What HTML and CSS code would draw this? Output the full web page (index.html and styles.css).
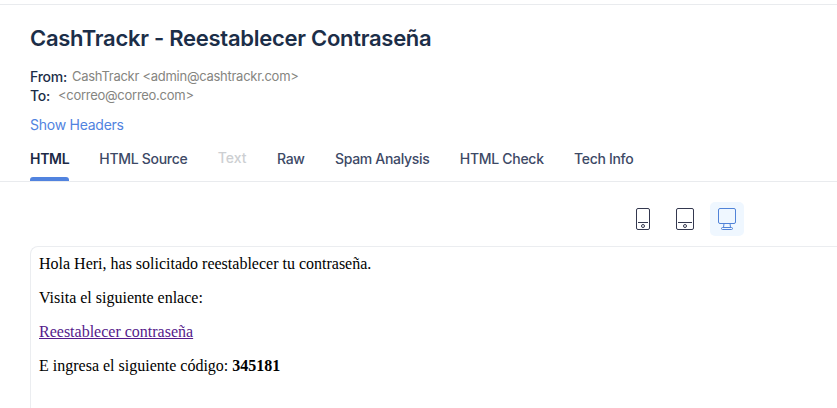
FILE: index.html
```html
<!DOCTYPE html>
<html lang="es">
<head>
<meta charset="utf-8">
<title>CashTrackr - Reestablecer Contraseña</title>
<link rel="stylesheet" href="styles.css">
</head>
<body>
<header class="mail-header">
  <h1 class="subject">CashTrackr - Reestablecer Contraseña</h1>
  <div class="meta"><span class="label">From:</span><span class="value">CashTrackr &lt;admin@cashtrackr.com&gt;</span></div>
  <div class="meta"><span class="label to">To:</span><span class="value">&lt;correo@correo.com&gt;</span></div>
  <a class="show-headers">Show Headers</a>
  <nav class="tabs">
    <span class="tab active">HTML</span><span class="tab">HTML Source</span><span class="tab disabled">Text</span><span class="tab">Raw</span><span class="tab">Spam Analysis</span><span class="tab">HTML Check</span><span class="tab">Tech Info</span>
  </nav>
</header>
<div class="devices">
  <span class="device"><svg width="16" height="24" viewBox="0 0 16 24"><rect x="1.5" y="1.5" width="13" height="21" rx="1.5"/><path d="M3 15.5h10"/><circle cx="8" cy="19" r="1.5"/></svg></span>
  <span class="device"><svg width="20" height="24" viewBox="0 0 20 24"><rect x="1.5" y="1.5" width="17" height="21" rx="1.5"/><path d="M3 15.5h14"/><circle cx="10" cy="19" r="1.5"/></svg></span>
  <span class="device selected"><svg width="20" height="24" viewBox="0 0 20 24"><rect x="1.5" y="1.5" width="17" height="15" rx="1.5"/><path d="M7 16.5l-.5 4M13 16.5l.5 4M6 20.5h8"/><rect x="4.5" y="20.5" width="11" height="2" rx="1"/></svg></span>
</div>
<main class="message">
  <p>Hola Heri, has solicitado reestablecer tu contraseña.</p>
  <p>Visita el siguiente enlace:</p>
  <p><a class="link">Reestablecer contraseña</a></p>
  <p>E ingresa el siguiente código: <b>345181</b></p>
</main>
</body>
</html>
```
FILE: styles.css
```css
* { box-sizing: border-box; }
body { margin: 0; height: 408px; overflow: hidden; background: #fff; font-family: Inter, sans-serif; color: #1c2e48; }
.mail-header { height: 178px; margin-top: 4px; padding: 19px 30px 0; border-top: 1px solid #e9ebee; border-bottom: 1px solid #e9ebee; }
.subject { margin: 0 0 15px; font-size: 22px; line-height: 28px; font-weight: 600; letter-spacing: -0.27px; }
.meta { display: flex; height: 19px; line-height: 19px; font-size: 14px; }
.label { width: 42px; font-weight: 500; letter-spacing: -0.25px; }
.label.to { width: 28px; }
.value { color: #85857f; font-size: 13px; letter-spacing: -0.27px; }
.show-headers { display: block; margin-top: 10px; font-size: 14px; line-height: 20px; letter-spacing: -0.25px; color: #5183df; }
.tabs { display: flex; gap: 30.3px; margin-top: 12px; }
.tab { height: 35px; line-height: 24px; font-size: 14px; font-weight: 500; letter-spacing: -0.3px; white-space: nowrap; color: #3d4966; }
.tab.active { width: 39px; font-weight: 600; color: #1c2945; }
.tab.active::after { content: ""; display: block; height: 4px; margin-top: 6px; background: #5183df; border-radius: 3px 3px 0 0; }
.tab.disabled { width: 29px; line-height: 22px; letter-spacing: 0; color: #cdcfd2; }
.devices { display: flex; gap: 8px; margin: 20px 0 10px 626px; height: 34px; }
.device { width: 34px; height: 34px; display: flex; align-items: center; justify-content: center; border-radius: 5px; }
.device svg { fill: none; stroke: #34384f; stroke-width: 1; }
.selected { background: #eff7ff; }
.device.selected svg { stroke: #5183d8; }
.message { margin-left: 30px; height: 180px; border: 1px solid #ebedf0; border-right: 0; border-radius: 8px 0 0; padding: 8px; font: 16px/18px "Liberation Serif", serif; color: #000; }
.message p { margin: 0 0 16px; }
.link { color: #551a8b; text-decoration: underline; }
```
